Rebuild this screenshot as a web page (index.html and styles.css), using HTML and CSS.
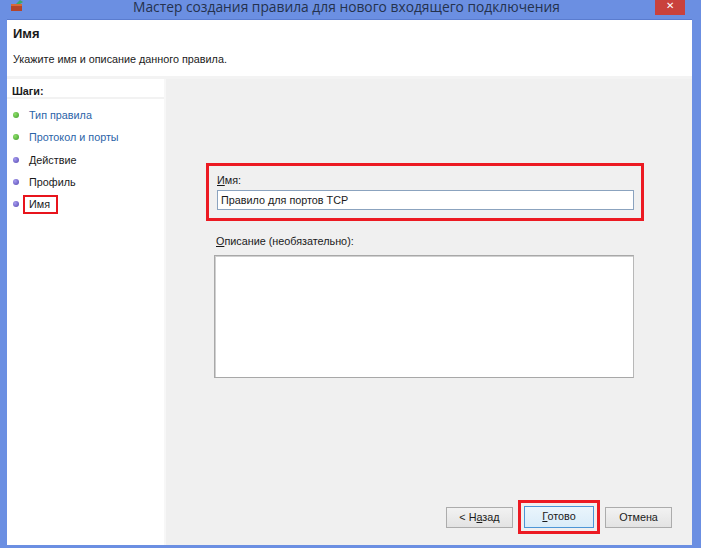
FILE: index.html
```html
<!DOCTYPE html>
<html lang="ru">
<head>
<meta charset="utf-8">
<link rel="stylesheet" href="styles.css">
</head>
<body>
<div class="window">
  <div class="titlebar">
    <svg class="appicon" width="14" height="12" viewBox="0 0 14 12">
      <rect x="1" y="4" width="11" height="7" fill="#b5452a"/>
      <rect x="1" y="4" width="11" height="2" fill="#d86a3a"/>
      <path d="M6 4 L10 0 L13 2 L10 4 Z" fill="#3aa86a"/>
    </svg>
    <div class="title">Мастер создания правила для нового входящего подключения</div>
    <div class="close">✕</div>
  </div>
  <div class="frame">
    <div class="header">
      <div class="h-title">Имя</div>
      <div class="h-sub">Укажите имя и описание данного правила.</div>
    </div>
    <div class="main">
      <div class="steps">
        <div class="steps-head">Шаги:</div>
        <ul class="step-list">
          <li class="step done"><span class="dot green"></span><span class="lnk">Тип правила</span></li>
          <li class="step done"><span class="dot green"></span><span class="lnk">Протокол и порты</span></li>
          <li class="step"><span class="dot violet"></span><span>Действие</span></li>
          <li class="step"><span class="dot violet"></span><span>Профиль</span></li>
          <li class="step"><span class="dot violet"></span><span class="mark">Имя</span></li>
        </ul>
      </div>
      <div class="content">
        <div class="name-box">
          <div class="lbl"><u>И</u>мя:</div>
          <div class="input">Правило для портов TCP</div>
        </div>
        <div class="lbl desc-lbl"><u>О</u>писание (необязательно):</div>
        <div class="textarea"></div>
        <div class="spacer"></div>
        <div class="buttons">
          <div class="btn">&lt; Н<u>а</u>зад</div>
          <div class="btn-mark"><div class="btn primary"><u>Г</u>отово</div></div>
          <div class="btn">Отмена</div>
        </div>
      </div>
    </div>
  </div>
</div>
</body>
</html>
```
FILE: styles.css
```css
* { box-sizing: border-box; }
html, body { margin: 0; padding: 0; }
body {
  width: 701px;
  height: 548px;
  overflow: hidden;
  background: #6b8fe2;
  font-family: "Liberation Sans", Arial, sans-serif;
  font-size: 10.8px;
  color: #1a1a1a;
}
.window {
  display: flex;
  flex-direction: column;
  height: 548px;
}
.titlebar {
  height: 19px;
  display: flex;
  align-items: flex-start;
  background: #6b8fe2;
}
.appicon { margin: 0 0 0 10px; }
.title {
  flex: 1;
  text-align: center;
  font-family: "Open Sans", "Noto Sans", sans-serif;
  font-size: 13.8px;
  line-height: 14px;
  color: #25324d;
  margin-top: 0;
  padding-left: 14px;
}
.close {
  width: 30px;
  height: 15px;
  margin-right: 16px;
  background: #c9413c;
  color: #fff;
  font-size: 10px;
  line-height: 12px;
  text-align: center;
}
.frame {
  flex: 1;
  margin: 0 9px 3px 7px;
  display: flex;
  flex-direction: column;
  background: #f0f0f0;
  border-top: 1px solid #5a7ccf;
}
.header {
  height: 59px;
  background: #fff;
  border-bottom: 3px solid #f3f3f3;
  padding: 6px 0 0 6px;
}
.h-title {
  font-weight: bold;
  font-size: 13px;
  line-height: 16px;
}
.h-sub {
  margin-top: 10px;
  line-height: 14px;
}
.main {
  flex: 1;
  display: flex;
}
.steps {
  width: 159px;
  background: #fff;
  border-right: 2px solid #f7f7f7;
}
.steps-head {
  font-weight: bold;
  padding: 6px 0 3px 5px;
  height: 20px;
  border-bottom: 2px solid #f2f2f2;
  line-height: 13px;
}
.step-list {
  list-style: none;
  margin: 0;
  padding: 5px 0 0 6px;
}
.step {
  display: flex;
  align-items: center;
  height: 22.3px;
}
.dot {
  width: 6px;
  height: 6px;
  border-radius: 50%;
  margin-right: 10px;
}
.dot.green { background: radial-gradient(circle at 35% 35%, #8ee06a, #3f9a2a); }
.dot.violet { background: radial-gradient(circle at 35% 35%, #a79cf0, #5347b0); }
.lnk { color: #2c64a8; }
.mark {
  border: 2px solid #e8141c;
  padding: 1px 6px 1px 4px;
  margin-left: -6px;
  line-height: 13px;
}
.content {
  flex: 1;
  display: flex;
  flex-direction: column;
  padding: 84px 20px 11px 40px;
}
.name-box {
  width: 438px;
  height: 58px;
  border: 3px solid #ec1a22;
  padding: 7px 7px 0 8px;
}
.lbl { line-height: 14px; }
.input {
  margin-top: 3px;
  height: 20px;
  background: #fff;
  border: 1px solid #8ba3bf;
  padding: 2px 3px;
  line-height: 14px;
}
.desc-lbl {
  margin: 13px 0 0 10px;
}
.textarea {
  margin: 7px 0 0 8px;
  width: 420px;
  height: 123px;
  background: #fff;
  border: 1px solid #a8a8a8;
  border-right-color: #b8b8b8;
  box-shadow: inset 1px 1px 0 #d0d0d0;
}
.spacer { flex: 1; }
.buttons {
  display: flex;
  justify-content: flex-end;
  align-items: center;
  gap: 5px;
}
.btn {
  width: 67px;
  height: 21px;
  border: 1px solid #acacac;
  background: linear-gradient(#f2f2f2, #e3e3e3);
  text-align: center;
  line-height: 19px;
}
.btn-mark {
  border: 3px solid #ec1a22;
  padding: 3px;
}
.btn.primary {
  width: 70px;
  height: 22px;
  border-color: #4c95d6;
  background: linear-gradient(#eaf5fc, #d9ecf9);
}
```
